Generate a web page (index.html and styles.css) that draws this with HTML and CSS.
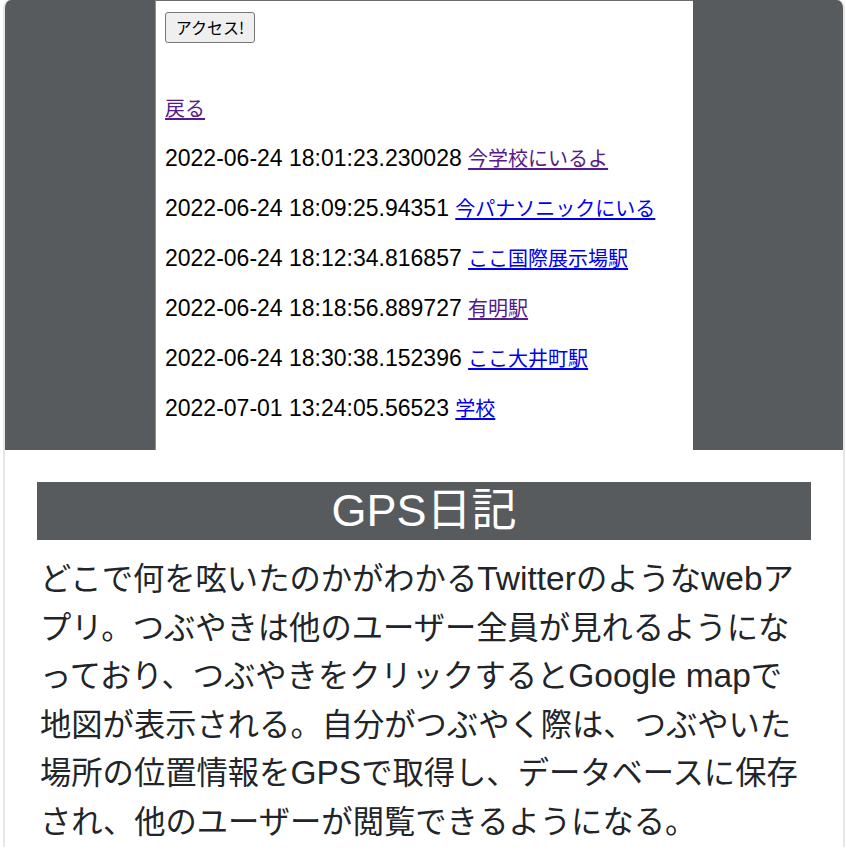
FILE: index.html
```html
<!DOCTYPE html>
<html lang="ja">
<head>
<meta charset="utf-8">
<title>GPS日記</title>
<link rel="stylesheet" href="styles.css">
</head>
<body>
<div class="card">
  <div class="preview">
    <div class="shot">
      <button class="access-btn" type="button">アクセス!</button>
      <div class="back-row"><a class="link visited" href="#">戻る</a></div>
      <div class="entry"><span class="ts">2022-06-24 18:01:23.230028</span> <a class="link visited" href="#">今学校にいるよ</a></div>
      <div class="entry"><span class="ts">2022-06-24 18:09:25.94351</span> <a class="link" href="#">今パナソニックにいる</a></div>
      <div class="entry"><span class="ts">2022-06-24 18:12:34.816857</span> <a class="link" href="#">ここ国際展示場駅</a></div>
      <div class="entry"><span class="ts">2022-06-24 18:18:56.889727</span> <a class="link visited" href="#">有明駅</a></div>
      <div class="entry"><span class="ts">2022-06-24 18:30:38.152396</span> <a class="link" href="#">ここ大井町駅</a></div>
      <div class="entry"><span class="ts">2022-07-01 13:24:05.56523</span> <a class="link" href="#">学校</a></div>
    </div>
  </div>
  <div class="card-body">
    <h2 class="title">GPS日記</h2>
    <p class="desc">どこで何を呟いたのかがわかる<span class="latin">Twitter</span>のような<span class="latin">web</span>ア<br>プリ。つぶやきは他のユーザー全員が見れるようにな<br>っており、つぶやきをクリックすると<span class="latin">Google map</span>で<br>地図が表示される。自分がつぶやく際は、つぶやいた<br>場所の位置情報を<span class="latin">GPS</span>で取得し、データベースに保存<br>され、他のユーザーが閲覧できるようになる。</p>
  </div>
</div>
</body>
</html>
```

FILE: styles.css
```css
html, body {
  margin: 0;
  padding: 0;
  background: #ffffff;
}

body {
  font-family: "Liberation Sans", "Noto Sans CJK JP", sans-serif;
  color: #212529;
  overflow: hidden;
}

.card {
  margin-left: 3px;
  width: 838px;
  border-left: 2px solid #e6e6e6;
  border-right: 2px solid #e6e6e6;
  border-radius: 8px 8px 0 0;
  overflow: hidden;
  background: #ffffff;
}

.preview {
  height: 450px;
  background: #585b5e;
  display: flex;
  justify-content: center;
}

.shot {
  width: 538px;
  height: 450px;
  box-sizing: border-box;
  background: #ffffff;
  border-left: 1px solid #8c8e90;
  border-top: 1px solid #6a6c6e;
  padding: 11px 0 0 9px;
  color: #000000;
  font-family: "Liberation Sans", "Noto Sans CJK JP", sans-serif;
  font-size: 23px;
}

.access-btn {
  display: block;
  width: 90px;
  height: 31px;
  padding: 0;
  background: #efefef;
  border: 1px solid #767676;
  border-radius: 3px;
  font-family: "Noto Sans CJK JP", sans-serif;
  font-size: 16px;
  color: #000000;
  line-height: 29px;
}

.back-row {
  margin-top: 40px;
  height: 50px;
  line-height: 50px;
}

.entry {
  height: 50px;
  line-height: 50px;
  white-space: nowrap;
}

.link {
  font-family: "Noto Sans CJK JP", sans-serif;
  font-size: 20px;
  color: #0000ee;
  text-decoration: underline;
  text-underline-offset: 2px;
}

.link.visited {
  color: #551a8b;
}

.card-body {
  padding: 32px 32px 0 32px;
}

.title {
  margin: 0;
  height: 58px;
  background: #585b5e;
  color: #ffffff;
  text-align: center;
  font-weight: normal;
  font-size: 45px;
  line-height: 58px;
}

.desc {
  margin: 16px 0 0 3px;
  font-size: 31.3px;
  line-height: 48.5px;
  color: #212529;
  white-space: nowrap;
}

.latin {
  font-size: 33.5px;
  line-height: 1;
}
```
